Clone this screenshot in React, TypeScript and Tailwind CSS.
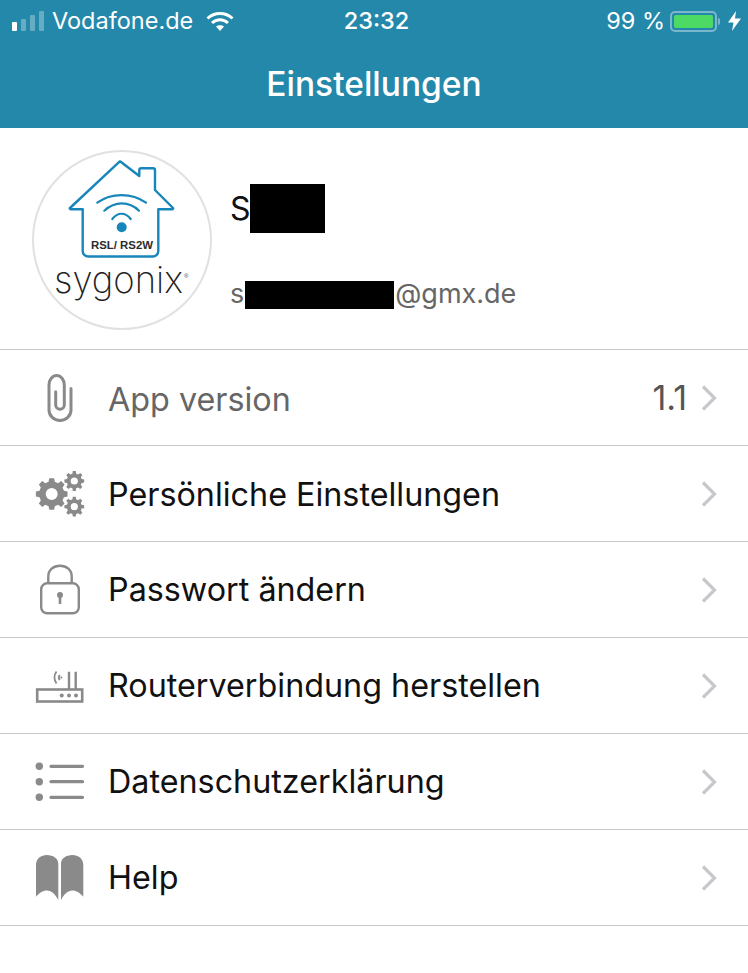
import React from 'react';

const iconColor = '#8a8a8a';

// outline of a cog wheel, the hole is cut out with evenodd
function gearPath(cx: number, cy: number, outer: number, inner: number, hole: number, teeth: number) {
  const pts: string[] = [];
  const step = (Math.PI * 2) / teeth;
  for (let i = 0; i < teeth; i++) {
    const a = i * step;
    const w = step * 0.24;
    [
      [inner, a - step * 0.32],
      [outer, a - w * 0.8],
      [outer, a + w * 0.8],
      [inner, a + step * 0.32],
    ].forEach(([r, t]) => {
      pts.push(`${(cx + r * Math.cos(t)).toFixed(2)} ${(cy + r * Math.sin(t)).toFixed(2)}`);
    });
  }
  return `M${pts.join('L')}Z M${cx - hole} ${cy}a${hole} ${hole} 0 1 0 ${hole * 2} 0a${hole} ${hole} 0 1 0 ${-hole * 2} 0Z`;
}

function IconBox({ children }: { children: React.ReactNode }) {
  return (
    <svg width="60" height="95" viewBox="0 0 60 95" fill="none" className="shrink-0">
      {children}
    </svg>
  );
}

function ClipIcon() {
  return (
    <IconBox>
      <path
        d="M41 38.5V60a11 10.5 0 0 1-22 0V35a7.6 9.5 0 0 1 15.3 0V55a4.3 4.3 0 0 1-8.6 0V41.7"
        stroke={iconColor}
        strokeWidth="3"
        strokeLinecap="round"
      />
    </IconBox>
  );
}

function GearsIcon() {
  return (
    <IconBox>
      <path fillRule="evenodd" fill={iconColor} d={gearPath(21.7, 48, 16, 12.6, 6, 8)} />
      <path fillRule="evenodd" fill={iconColor} d={gearPath(44.3, 35, 10, 7.6, 3.6, 8)} />
      <path fillRule="evenodd" fill={iconColor} d={gearPath(44.3, 60.7, 10, 7.6, 3.6, 8)} />
    </IconBox>
  );
}

function LockIcon() {
  return (
    <IconBox>
      <rect x="11.2" y="41.3" width="37.6" height="30" rx="6" stroke={iconColor} strokeWidth="2.4" />
      <path d="M18.3 41V34.5C18.3 28 23.5 23.8 30 23.8S41.7 28 41.7 34.5V41" stroke={iconColor} strokeWidth="2.4" />
      <circle cx="30" cy="53" r="3" fill={iconColor} />
      <path d="M30 53V62" stroke={iconColor} strokeWidth="2.6" />
    </IconBox>
  );
}

function RouterIcon() {
  return (
    <IconBox>
      <rect x="7.2" y="51.5" width="45" height="12" stroke={iconColor} strokeWidth="2.6" />
      <circle cx="31.7" cy="57.4" r="2" fill={iconColor} />
      <circle cx="39" cy="57.4" r="2" fill={iconColor} />
      <circle cx="46" cy="57.4" r="2" fill={iconColor} />
      <path d="M39 33.7V51M45.7 33.7V51" stroke={iconColor} strokeWidth="2.4" />
      <path d="M26.5 33.5C23.8 37 23.8 42 26.5 45.5" stroke={iconColor} strokeWidth="1.8" />
      <path d="M29.8 37C28.6 38.5 28.6 40.5 29.8 42" stroke={iconColor} strokeWidth="1.8" />
      <circle cx="31.4" cy="39.5" r="1" fill={iconColor} />
    </IconBox>
  );
}

function ListIcon() {
  return (
    <IconBox>
      <circle cx="9.3" cy="32.3" r="3.7" fill={iconColor} />
      <circle cx="9.3" cy="47.7" r="3.7" fill={iconColor} />
      <circle cx="9.3" cy="63.3" r="3.7" fill={iconColor} />
      <path d="M21 32.3H52.5M21 47.7H52.5M21 63.3H52.5" stroke={iconColor} strokeWidth="3.2" strokeLinecap="round" />
    </IconBox>
  );
}

function BookIcon() {
  return (
    <IconBox>
      <path
        d="M6 35C6 28.5 11 25 17 25S28.3 28.5 28.3 33.5V70C25 64 21.5 60.5 17 60.5S9.5 63 6 66.7Z"
        fill={iconColor}
      />
      <path
        d="M53.3 35C53.3 28.5 48.3 25 42.3 25S31 28.5 31 33.5V70C34.3 64 37.8 60.5 42.3 60.5S49.8 63 53.3 66.7Z"
        fill={iconColor}
      />
    </IconBox>
  );
}

function SygonixLogo() {
  return (
    <svg width="180" height="180" viewBox="0 0 180 180" fill="none" className="block">
      <circle cx="90" cy="90" r="89" fill="#fff" stroke="#e1e1e1" strokeWidth="2" />
      <path
        d="M88.7 11.7L107.3 26V20.3a2 2 0 0 1 2-2H121a2 2 0 0 1 2 2V40L141 58a.8.8 0 0 1-.6 1.3H126.3V101a5.5 5.5 0 0 1-5.5 5.5H56.2a5.5 5.5 0 0 1-5.5-5.5V59.3H38.6a.8.8 0 0 1-.6-1.3L87 12.2a1.4 1.4 0 0 1 1.7-.5Z"
        stroke="#1786ba"
        strokeWidth="2.4"
        strokeLinejoin="round"
      />
      <path d="M65.3 52.7C79 42.5 100 42.5 114 52.7" stroke="#1786ba" strokeWidth="2.2" strokeLinecap="round" />
      <path d="M72.3 60.7C83 51 97 51 107 60.7" stroke="#1786ba" strokeWidth="2.2" strokeLinecap="round" />
      <path d="M80.3 69C85.5 62 93.5 62 98.7 69" stroke="#1786ba" strokeWidth="2.2" strokeLinecap="round" />
      <circle cx="89.7" cy="77.3" r="5" fill="#1786ba" />
      <text
        x="90"
        y="98.5"
        textAnchor="middle"
        textLength="62"
        lengthAdjust="spacingAndGlyphs"
        fontFamily="'Liberation Sans', sans-serif"
        fontWeight="700"
        fontSize="11.5"
        fill="#2b2b2b"
      >
        RSL/ RS2W
      </text>
      <text
        x="22"
        y="143"
        textLength="129"
        lengthAdjust="spacingAndGlyphs"
        fontFamily="Inter, sans-serif"
        fontWeight="200"
        fontSize="37"
        fill="#222"
      >
        sygonix
      </text>
      <text x="152" y="128" fontFamily="'Liberation Sans', sans-serif" fontSize="6" fill="#444">
        ®
      </text>
    </svg>
  );
}

function Chevron() {
  return (
    <svg width="18" height="28" viewBox="0 0 18 28" fill="none" className="shrink-0">
      <path d="M3 2.5L14.5 14L3 25.5" stroke="#c7c7cc" strokeWidth="3.2" />
    </svg>
  );
}

function Row({
  icon,
  label,
  value,
  muted,
  labelClass,
}: {
  icon: React.ReactNode;
  label: string;
  value?: string;
  muted?: boolean;
  labelClass?: string;
}) {
  return (
    <div className="flex h-[96px] items-center border-b border-[#c8c7cc] pl-[30px] pr-[30px]">
      {icon}
      <span className={`ml-[18px] flex-1 text-[32.3px] ${muted ? 'text-[#666]' : 'text-[#111]'} ${labelClass ?? ''}`}>
        {label}
      </span>
      {value && <span className="mr-[13px] pb-[1px] text-[34px] text-[#555]">{value}</span>}
      <Chevron />
    </div>
  );
}

function StatusBar() {
  return (
    <div className="grid h-[40px] grid-cols-3 items-center pl-[12px] pr-[7px] pt-[2px] text-[23.5px] text-white">
      <div className="flex items-center">
        <div className="flex items-end gap-[4px]">
          <div className="h-[9px] w-[5px] rounded-[1px] bg-white" />
          <div className="h-[12px] w-[5px] rounded-[1px] bg-white/30" />
          <div className="h-[16px] w-[5px] rounded-[1px] bg-white/30" />
          <div className="h-[20px] w-[5px] rounded-[1px] bg-white/30" />
        </div>
        <span className="ml-[8px] whitespace-nowrap">Vodafone.de</span>
        <svg width="28" height="20" viewBox="0 0 28 20" fill="none" className="ml-[13px] shrink-0">
          <path d="M1.5 7.5C8.5 .8 19.5 .8 26.5 7.5" stroke="#fff" strokeWidth="3" />
          <path d="M6 12C10.8 7.6 17.2 7.6 22 12" stroke="#fff" strokeWidth="3" />
          <path d="M10 15.6L14 20L18 15.6C15.8 13.8 12.2 13.8 10 15.6Z" fill="#fff" />
        </svg>
      </div>
      <div className="text-center font-medium">23:32</div>
      <div className="flex items-center justify-end">
        <span>99 %</span>
        <div className="ml-[5px] flex items-center">
          <div className="h-[21px] w-[47px] rounded-[5px] border-2 border-white/40 p-[2px]">
            <div className="h-full w-full rounded-[2px] bg-[#4cd964]" />
          </div>
          <div className="ml-[1px] h-[7px] w-[2px] rounded-r-[2px] bg-white/40" />
        </div>
        <svg width="13" height="20" viewBox="0 0 13 20" className="ml-[8px] shrink-0">
          <path d="M8 0L0 11.5H5.5L4 20L13 7.5H7Z" fill="#fff" />
        </svg>
      </div>
    </div>
  );
}

export default function App() {
  return (
    <div className="h-[973px] w-[748px] overflow-hidden bg-white font-['Inter',sans-serif]">
      <div className="h-[128px] bg-[#2488aa]">
        <StatusBar />
        <h1 className="mt-[19px] text-center text-[33.5px] font-medium text-white">Einstellungen</h1>
      </div>

      <div className="flex h-[222px] items-start border-b border-[#c8c7cc] pl-[32px] pt-[22px]">
        <SygonixLogo />
        <div className="ml-[19px] pt-[34px]">
          <div className="flex h-[49px] items-center text-[32px] text-[#111]">
            <span className="-ml-[1px]">S</span>
            <div className="-ml-[1px] h-[49px] w-[75px] bg-black" />
          </div>
          <div className="mt-[48px] flex h-[28px] items-center text-[27px] text-[#666]">
            <span className="-ml-[1px] pb-[1px]">s</span>
            <div className="ml-[1px] h-[28px] w-[149px] bg-black" />
            <span className="ml-[1px] pb-[1px]">@gmx.de</span>
          </div>
        </div>
      </div>

      <Row icon={<ClipIcon />} label="App version" value="1.1" muted labelClass="pt-[6px]" />
      <Row icon={<GearsIcon />} label="Persönliche Einstellungen" labelClass="pt-[4px]" />
      <Row icon={<LockIcon />} label="Passwort ändern" labelClass="pt-[1px]" />
      <Row icon={<RouterIcon />} label="Routerverbindung herstellen" labelClass="pt-[2px]" />
      <Row icon={<ListIcon />} label="Datenschutzerklärung" labelClass="pt-[2px]" />
      <Row icon={<BookIcon />} label="Help" labelClass="pt-[2px]" />
    </div>
  );
}
